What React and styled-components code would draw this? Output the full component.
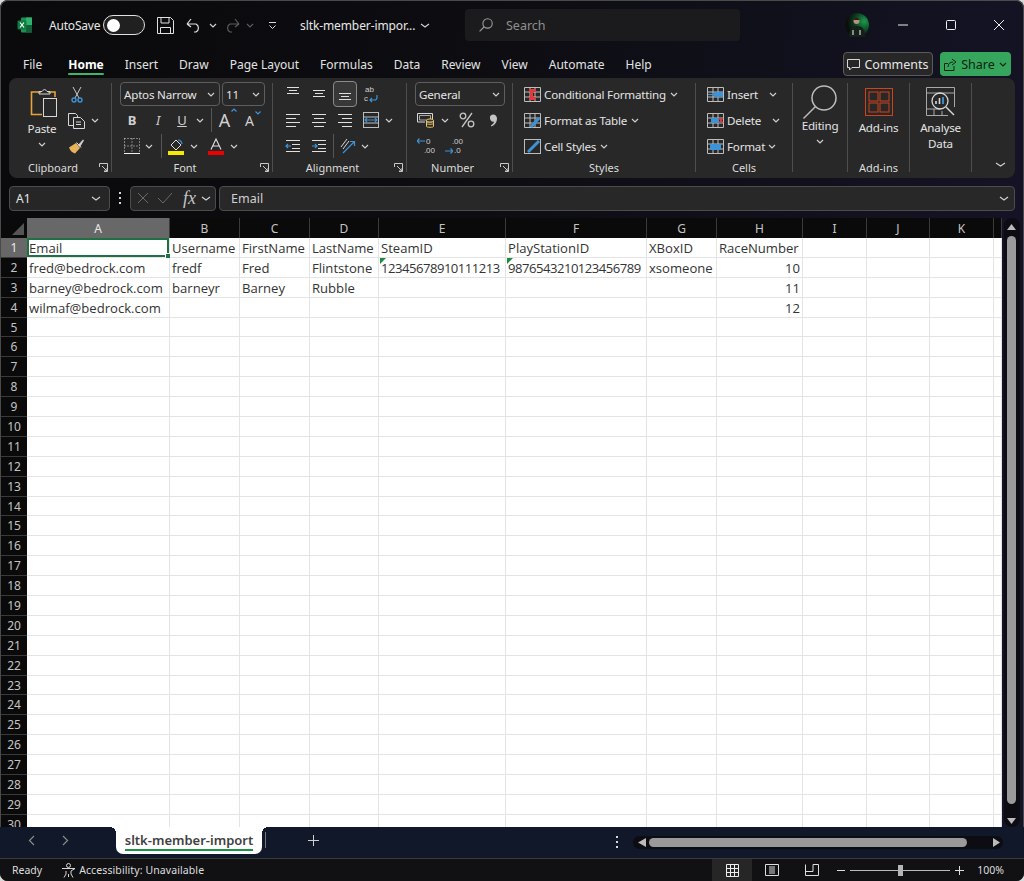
import React from 'react';
import styled, { createGlobalStyle } from 'styled-components';

const UI = '"Noto Sans", "Open Sans", sans-serif';

const GlobalStyle = createGlobalStyle`
  html, body { margin: 0; padding: 0; background: #d9d9d9; }
  body { font-family: ${UI}; width: 1024px; height: 881px; overflow: hidden; }
  * { box-sizing: border-box; }
`;

const Window = styled.div`
  width: 1024px;
  height: 881px;
  display: flex;
  flex-direction: column;
  overflow: hidden;
  border-radius: 8px;
  box-shadow: inset 0 0 0 1px #4a4a4a;
  background: linear-gradient(100deg, #0a0a0c 0%, #0d0d12 45%, #15152a 100%);
  color: #e6e6e6;
`;

/* title bar */
const TitleBar = styled.header`
  height: 50px;
  flex: none;
  display: flex;
  align-items: center;
  padding-left: 17px;
`;

const Slot = styled.div`
  width: ${(p) => p.$w || 26}px;
  margin-left: ${(p) => p.$ml || 0}px;
  height: 26px;
  flex: none;
  display: flex;
  align-items: center;
  justify-content: center;
  border-radius: 4px;
  ${(p) => p.$on && 'border: 1px solid #8a8a8a; background: #383838;'}
  ${(p) => p.$flip && 'transform: scaleX(-1);'}
`;

const AutoSave = styled.span`
  font-size: 12px;
  margin-left: 16px;
  width: 54px;
  flex: none;
  letter-spacing: -0.2px;
`;

const Toggle = styled.div`
  width: 42px;
  height: 20px;
  border: 1px solid #e0e0e0;
  border-radius: 10px;
  flex: none;
  display: flex;
  align-items: center;
  padding-left: 3px;
  background: #202020;
  &::before {
    content: '';
    width: 13px;
    height: 13px;
    border-radius: 50%;
    background: #fff;
  }
`;

const FileName = styled.span`
  font-size: 12px;
  letter-spacing: -0.1px;
  width: 118px;
  margin-left: 21px;
  flex: none;
  white-space: nowrap;
`;

const SearchBox = styled.div`
  width: 275px;
  height: 32px;
  margin-left: 33px;
  flex: none;
  background: #1b1b1d;
  border-radius: 4px;
  display: flex;
  align-items: center;
  padding-left: 14px;
  gap: 13px;
  font-size: 12.5px;
  color: #8f8f8f;
`;

const WinButtons = styled.div`
  display: flex;
  align-items: center;
  margin-left: 12px;
`;

/* tabs */
const TabsRow = styled.nav`
  height: 28px;
  flex: none;
  display: flex;
  align-items: center;
  padding-left: 23px;
  gap: 21px;
  font-size: 12px;
`;

const TabLabel = styled.span`
  position: relative;
  font-weight: ${(p) => (p.$on ? 700 : 400)};
  margin-left: ${(p) => (p.$on ? 5 : 0)}px;
  white-space: nowrap;
  color: ${(p) => (p.$on ? '#fff' : '#e2e2e2')};
  ${(p) =>
    p.$on &&
    `&::after {
      content: '';
      position: absolute;
      left: 0;
      right: 0;
      bottom: -2px;
      height: 2px;
      border-radius: 1px;
      background: #3fb56b;
    }`}
`;

const TabsRight = styled.div`
  margin-left: auto;
  margin-right: 13px;
  display: flex;
  gap: 7px;
`;

const CommentsBtn = styled.div`
  width: 90px;
  height: 24px;
  border: 1px solid #5a5a5a;
  border-radius: 4px;
  background: #272727;
  font-size: 12.5px;
  display: flex;
  align-items: center;
  justify-content: center;
  gap: 4px;
`;

const ShareBtn = styled.div`
  width: 71px;
  height: 24px;
  border-radius: 4px;
  background: #35a65c;
  color: #0c2414;
  font-size: 12.5px;
  display: flex;
  align-items: center;
  justify-content: center;
  gap: 4px;
`;

/* ribbon */
const Ribbon = styled.div`
  height: 100px;
  flex: none;
  margin: 0 9px;
  background: #282828;
  border-radius: 8px;
  display: flex;
  font-size: 11.6px;
  letter-spacing: -0.2px;
  color: #e4e4e4;
`;

const Group = styled.section`
  width: ${(p) => p.$w}px;
  flex: none;
  display: flex;
  flex-direction: column;
`;

const GroupBody = styled.div`
  height: 81px;
  padding-top: 3px;
  display: flex;
  flex-direction: ${(p) => (p.$row ? 'row' : 'column')};
`;

const GroupFoot = styled.div`
  height: 19px;
  display: flex;
  align-items: center;
  font-size: 11px;
  letter-spacing: 0;
  color: #dcdcdc;
  padding-bottom: 2px;
`;

const GroupLabel = styled.span`
  flex: 1;
  text-align: center;
`;

const LauncherBox = styled.span`
  margin: 0 3px 0 2px;
  display: flex;
`;

const Divider = styled.div`
  width: 1px;
  height: 89px;
  margin-top: 5px;
  flex: none;
  background: #4e4e4e;
`;

const ToolRow = styled.div`
  height: 26px;
  display: flex;
  align-items: center;
  padding-left: ${(p) => p.$pl || 0}px;
`;

const RowRule = styled.div`
  width: 1px;
  height: 24px;
  flex: none;
  margin: 0 ${(p) => p.$m || 4}px;
  background: #555;
`;

const Select = styled.div`
  width: ${(p) => p.$w}px;
  height: 24px;
  margin-left: ${(p) => p.$ml || 0}px;
  flex: none;
  border: 1px solid #5e5e5e;
  border-radius: 4px;
  display: flex;
  align-items: center;
  justify-content: space-between;
  padding: 0 4px 0 3px;
  white-space: nowrap;
`;

const Glyph = styled.span`
  font-size: ${(p) => p.$size || 13}px;
  font-weight: ${(p) => p.$weight || 400};
  font-style: ${(p) => (p.$italic ? 'italic' : 'normal')};
  text-decoration: ${(p) => (p.$under ? 'underline' : 'none')};
  color: #d0d0d0;
  letter-spacing: 0;
`;

const SizeGlyph = styled.div`
  display: flex;
  align-items: flex-start;
  gap: 1px;
`;

/* small stacked text inside a ribbon button: wrap text, decimals */
const StackIcon = styled.div`
  width: 18px;
  display: flex;
  flex-direction: column;
  font-family: "Liberation Sans", sans-serif;
  font-size: 8px;
  line-height: 9.2px;
  letter-spacing: 0;
  color: #d0d0d0;
`;

const StackLine = styled.div`
  display: flex;
  align-items: center;
  justify-content: ${(p) => (p.$end ? 'flex-end' : 'flex-start')};
  gap: 1px;
  padding-left: ${(p) => p.$pl || 0}px;
`;

const BigBtn = styled.div`
  width: ${(p) => p.$w}px;
  margin-left: ${(p) => p.$ml || 0}px;
  flex: none;
  display: flex;
  flex-direction: column;
  align-items: center;
  padding-top: ${(p) => p.$pt || 0}px;
  line-height: 16px;
  text-align: center;
`;

const BigIcon = styled.div`
  height: ${(p) => p.$h}px;
  margin-left: ${(p) => p.$ml || 0}px;
  display: flex;
  align-items: center;
  justify-content: center;
`;

const BigText = styled.span`
  margin-top: ${(p) => p.$mt || 0}px;
`;

const ListRow = styled.div`
  height: 26px;
  display: flex;
  align-items: center;
  padding-left: 11px;
  white-space: nowrap;
  gap: 3px;
`;

const ListChev = styled.span`
  margin-left: ${(p) => p.$ml || 0}px;
  display: flex;
`;

const CollapseCell = styled.div`
  flex: 1;
  display: flex;
  align-items: flex-end;
  justify-content: flex-end;
  padding: 0 9px 11px 0;
`;

/* formula bar */
const FormulaBar = styled.div`
  height: 40px;
  flex: none;
  padding: 0 9px;
  display: flex;
  align-items: center;
`;

const NameBox = styled.div`
  width: 101px;
  height: 25px;
  flex: none;
  background: #262626;
  border: 1px solid #4c4c4c;
  border-radius: 4px;
  display: flex;
  align-items: center;
  justify-content: space-between;
  padding: 0 8px 0 6px;
  font-size: 12px;
`;

const Dots = styled.div`
  width: 20px;
  flex: none;
  display: flex;
  justify-content: center;
`;

const FxBox = styled.div`
  width: 86px;
  height: 25px;
  flex: none;
  background: #262626;
  border: 1px solid #4c4c4c;
  border-radius: 4px;
  display: flex;
  align-items: center;
  padding-left: 6px;
  gap: 8px;
`;

const FxText = styled.span`
  font-family: "Liberation Serif", serif;
  font-style: italic;
  font-size: 18px;
  line-height: 20px;
  color: #c4c4c4;
  margin: 0 -3px 0 2px;
`;

const FormulaInput = styled.div`
  flex: 1;
  height: 25px;
  margin-left: 3px;
  background: #282828;
  border: 1px solid #4c4c4c;
  border-radius: 4px;
  display: flex;
  align-items: center;
  justify-content: space-between;
  padding: 0 5px 0 11px;
  font-size: 12.5px;
  color: #d0d0d0;
`;

/* sheet */
const SheetArea = styled.div`
  height: 609px;
  flex: none;
  display: flex;
  padding-left: 1px;
`;

const Sheet = styled.div`
  width: 1001px;
  flex: none;
  overflow: hidden;
  display: grid;
  grid-template-columns: 26px 143px 70px 70px 69px 127px 141px 70px 86px 64px 63px 64px 8px;
  grid-template-rows: 20px;
  grid-auto-rows: 19.9px;
  background: #fff;
`;

const CornerCell = styled.div`
  background: #0a0a0a;
  display: flex;
  align-items: flex-end;
  justify-content: flex-end;
  padding: 0 3px 3px 0;
  &::after {
    content: '';
    width: 12px;
    height: 12px;
    background: #555;
    clip-path: polygon(100% 0, 100% 100%, 0 100%);
  }
`;

const ColHead = styled.div`
  background: ${(p) => (p.$on ? '#686868' : '#0a0a0a')};
  border-right: 1px solid #3a3a3a;
  color: ${(p) => (p.$on ? '#e8e8e8' : '#c4c4c4')};
  font-size: 12px;
  display: flex;
  align-items: center;
  justify-content: center;
`;

const RowHead = styled.div`
  background: ${(p) => (p.$on ? '#686868' : '#0a0a0a')};
  border-bottom: 1px solid #3a3a3a;
  color: ${(p) => (p.$on ? '#e8e8e8' : '#c4c4c4')};
  font-size: 12px;
  display: flex;
  align-items: center;
  justify-content: center;
`;

const Cell = styled.div`
  position: relative;
  background: #fff;
  border-right: 1px solid #e4e4e4;
  border-bottom: 1px solid #e4e4e4;
  color: #333;
  font-family: "Open Sans", sans-serif;
  font-size: 13.1px;
  line-height: 19px;
  padding: 1px 2px 0 2px;
  white-space: nowrap;
  text-align: ${(p) => (p.$right ? 'right' : 'left')};
  letter-spacing: ${(p) => (p.$digits ? '-0.5px' : '0')};
  ${(p) =>
    p.$flag &&
    `&::before {
      content: '';
      position: absolute;
      left: 1px;
      top: 0;
      width: 6px;
      height: 6px;
      background: #1e8a3c;
      clip-path: polygon(0 0, 100% 0, 0 100%);
    }`}
  ${(p) =>
    p.$sel &&
    `box-shadow: inset 0 0 0 2px #1f7145;
    &::after {
      content: '';
      position: absolute;
      right: -2px;
      bottom: -2px;
      width: 5px;
      height: 5px;
      background: #1f7145;
      outline: 1px solid #fff;
    }`}
`;

const VScroll = styled.div`
  flex: 1;
  display: flex;
  justify-content: center;
  padding: 0 3px 0 0;
`;

const VGutter = styled.div`
  width: 16px;
  display: flex;
  flex-direction: column;
  align-items: center;
  padding: 6px 0 3px;
  background: #0c0c12;
  border-radius: 8px;
`;

const VTrack = styled.div`
  width: 9px;
  flex: 1;
  border-radius: 5px;
  margin: 6px 0 14px;
  background: #9a9a9a;
`;

/* bottom */
const SheetTabs = styled.div`
  height: 31px;
  flex: none;
  display: flex;
  align-items: flex-start;
  background: #10182a;
`;

const NavArrows = styled.div`
  width: 116px;
  height: 27px;
  flex: none;
  display: flex;
  align-items: center;
  padding-left: 28px;
  gap: 25px;
`;

const TabLine = styled.span`
  border-bottom: 2px solid #1c9148;
  line-height: 18px;
`;

const SheetTab = styled.div`
  position: relative;
  width: 146px;
  height: 27px;
  flex: none;
  background: #fff;
  border-radius: 0 0 7px 7px;
  color: #3f3f3f;
  font-size: 13px;
  font-weight: 600;
  display: flex;
  justify-content: center;
  align-items: center;
  white-space: nowrap;
  &::before,
  &::after {
    content: '';
    position: absolute;
    top: 0;
    width: 6px;
    height: 6px;
  }
  &::before {
    left: -6px;
    background: radial-gradient(circle at 0 100%, transparent 6px, #fff 6px);
  }
  &::after {
    right: -6px;
    background: radial-gradient(circle at 100% 100%, transparent 6px, #fff 6px);
  }
`;

const TabRule = styled.div`
  width: 1px;
  height: 16px;
  margin: 5px 0 0 3px;
  flex: none;
  background: #777;
`;

const AddSheet = styled.div`
  margin-left: 42px;
  height: 27px;
  flex: none;
  display: flex;
  align-items: center;
`;

const TabDots = styled.div`
  margin: 9px 15px 0 auto;
  flex: none;
`;

const HScrollWrap = styled.div`
  width: 370px;
  height: 13px;
  margin: 9px 21px 0 0;
  flex: none;
  background: #0c0c12;
  border-radius: 7px;
  display: flex;
  align-items: center;
  padding-left: 5px;
  gap: 3px;
`;

const HThumb = styled.div`
  width: 318px;
  height: 9px;
  flex: none;
  border-radius: 5px;
  background: #9a9a9a;
  margin-right: 23px;
`;

const StatusBar = styled.footer`
  height: 23px;
  flex: none;
  display: flex;
  align-items: center;
  background: #111113;
  border-top: 1px solid #3a3a3a;
  padding-left: 12px;
  font-size: 10.5px;
  color: #dedede;
`;

const StatusText = styled.span`
  margin-left: ${(p) => p.$ml || 0}px;
  letter-spacing: ${(p) => p.$ls || 0}px;
  white-space: nowrap;
`;

const StatusIcon = styled.span`
  margin-left: 19px;
  display: flex;
`;

const ViewBtn = styled.div`
  width: 40px;
  height: 22px;
  flex: none;
  display: flex;
  align-items: center;
  justify-content: center;
  background: ${(p) => (p.$on ? '#262626' : 'transparent')};
`;

const ViewGroup = styled.div`
  margin-left: auto;
  display: flex;
`;

const ZoomTrack = styled.div`
  width: 100px;
  height: 1px;
  margin: 0 5px;
  flex: none;
  background: #bbb;
  display: flex;
  justify-content: center;
  align-items: center;
  &::after {
    content: '';
    width: 5px;
    height: 11px;
    background: #b5b5b5;
  }
`;

const ZoomWrap = styled.div`
  display: flex;
  align-items: center;
  margin: 0 20px 0 5px;
`;

const ZoomValue = styled.span`
  margin-left: 13px;
`;

/* icons */
const SvgBase = styled.svg`
  display: block;
  flex: none;
`;

const Svg = ({ w = 16, h = 16, children, ...rest }) => (
  <SvgBase width={w} height={h} viewBox={`0 0 ${w} ${h}`} fill="none" stroke="#d8d8d8" strokeWidth="1" {...rest}>
    {children}
  </SvgBase>
);

const Chev = ({ w = 8, c = '#cfcfcf' }) => (
  <Svg w={w} h={5} stroke={c} strokeWidth="1.2">
    <path d={`M1 1l${(w - 2) / 2} 3l${(w - 2) / 2} -3`} />
  </Svg>
);

// rows of lines: [x1, x2, y]
const Lines = ({ rows, children }) => (
  <Svg w={16} h={16} stroke="#e0e0e0">
    {rows.map(([a, b, y]) => (
      <path key={y + '-' + a} d={`M${a} ${y}.5H${b}`} />
    ))}
    {children}
  </Svg>
);

const Launcher = () => (
  <LauncherBox>
    <Svg w={9} h={9} stroke="#c8c8c8">
      <path d="M.5 4V.5H8.5V8.5H5M3 3l5 5M5 8h3V5" />
    </Svg>
  </LauncherBox>
);

const ExcelLogo = () => (
  <Svg w={16} h={16} stroke="none">
    <rect x="4" y="0.5" width="11" height="15" rx="1" fill="#1f8f52" />
    <rect x="9" y="0.5" width="6" height="7.5" fill="#2fb26d" />
    <rect x="9" y="8" width="6" height="7.5" fill="#135f37" />
    <rect x="0.5" y="3.5" width="9" height="9" rx="1" fill="#0f7b40" />
    <path d="M3 5.5l4 5M7 5.5l-4 5" stroke="#fff" strokeWidth="1.2" />
  </Svg>
);

const SaveIcon = () => (
  <Svg w={17} h={17} stroke="#e0e0e0">
    <path d="M.5.5H13.5L16.5 3.5V16.5H.5ZM4 .5V6H12V.5M3.5 16.5V10.5H13.5V16.5" />
  </Svg>
);

const UndoIcon = ({ c = '#e0e0e0' }) => (
  <Svg w={16} h={16} stroke={c} strokeWidth="1.2">
    <path d="M1 7h9a4.5 4.5 0 0 1 0 8H8M1 7l4-5M1 7l4 3" />
  </Svg>
);

const Customize = () => (
  <Svg w={9} h={9} stroke="#d8d8d8">
    <path d="M1 1.5h7M1.5 4.5l3 3l3 -3" />
  </Svg>
);

const Avatar = () => (
  <SvgBase width="24" height="24" viewBox="0 0 24 24">
    <defs>
      <radialGradient id="av" cx="0.8" cy="0.35" r="0.7">
        <stop offset="0" stopColor="#1c9a4c" />
        <stop offset="0.6" stopColor="#0d3a20" />
        <stop offset="1" stopColor="#0a0f0c" />
      </radialGradient>
    </defs>
    <circle cx="12" cy="12" r="12" fill="url(#av)" />
    <path d="M4 24c0-8 3-11 8-11s8 3 8 11z" fill="#14201a" />
    <circle cx="11.5" cy="8" r="3" fill="#b59476" />
    <path d="M8.5 7c0-3 6-3 6 0z" fill="#2a2016" />
    <path d="M8 22v-5M15 22v-5" stroke="#a8a898" strokeWidth="1.6" />
  </SvgBase>
);

const PasteIcon = () => (
  <Svg w={28} h={30} stroke="#e8a33b" strokeWidth="1.6">
    <path d="M11 4H1.5V26.5H12M18 4H25V9" />
    <path d="M9 6V3.5H12L14.5 1L17 3.5H20V6Z" stroke="#d8d8d8" strokeWidth="1" />
    <rect x="13.5" y="10.5" width="13" height="18" stroke="#d8d8d8" strokeWidth="1" />
  </Svg>
);

const CutIcon = () => (
  <Svg w={12} h={17}>
    <path d="M2 1l6 11M10 1L4 12" stroke="#c8c8c8" />
    <circle cx="3" cy="14" r="2" stroke="#3c93d8" strokeWidth="1.4" />
    <circle cx="9" cy="14" r="2" stroke="#3c93d8" strokeWidth="1.4" />
  </Svg>
);

const CopyIcon = () => (
  <Svg w={17} h={17}>
    <path d="M5.5 13.5H.5V1.5H7.5L9.5 3.5V5" />
    <path d="M5.5 5.5H12.5L16.5 9.5V16.5H5.5ZM8 10h5M8 12.5h5" />
  </Svg>
);

const PainterIcon = () => (
  <Svg w={17} h={16} stroke="none">
    <path d="M1 9.5L8 5l4 5L7 15.5C5 15 2 13 1 9.5Z" fill="#e6b25a" />
    <path d="M10 7l5-5.5l1 1L12 9" fill="#cfcfcf" />
    <path d="M8.5 4.5l4.5 5" stroke="#f2f2f2" />
  </Svg>
);

const BordersIcon = () => (
  <Svg w={16} h={16}>
    <path d="M.5 .5H15.5M.5 8H15.5M8 .5V15M.5 .5V15M15.5 .5V15" strokeDasharray="1 2" />
    <path d="M0 15.5H16" stroke="#f0f0f0" />
  </Svg>
);

const FillIcon = () => (
  <Svg w={16} h={17}>
    <path d="M3 7l5-5 5 5-5 5Z" stroke="#e0e0e0" />
    <path d="M10 2c2 0 4 2 4 4" stroke="#3c93d8" strokeWidth="1.2" />
    <rect x="0" y="13" width="16" height="4" fill="#f6ea00" stroke="none" />
  </Svg>
);

const FontColorIcon = () => (
  <Svg w={16} h={17} strokeWidth="1.1">
    <path d="M3 11.5L8 1l5 10.5M5 8h6" stroke="#e0e0e0" />
    <rect x="0" y="13" width="16" height="4" fill="#ef0000" stroke="none" />
  </Svg>
);

const Caret = ({ up }) => (
  <Svg w={6} h={4} stroke="#3c93d8" strokeWidth="1.2">
    <path d={up ? 'M.5 3.5L3 1l2.5 2.5' : 'M.5 .5L3 3l2.5-2.5'} />
  </Svg>
);

const WrapIcon = () => (
  <StackIcon>
    <StackLine $pl={3}>ab</StackLine>
    <StackLine $pl={2}>
      c
      <Svg w={9} h={8} stroke="#3c93d8" strokeWidth="1.2">
        <path d="M8 0v2.5a2.5 2.5 0 0 1-2.5 2.5H1M3 3L1 5l2 2" />
      </Svg>
    </StackLine>
  </StackIcon>
);

const PercentIcon = () => (
  <Svg w={16} h={16} stroke="#c4c4c4" strokeWidth="1.3">
    <circle cx="4" cy="4" r="2.8" />
    <circle cx="12" cy="12" r="2.8" />
    <path d="M13 1L3 15" />
  </Svg>
);

const CommaIcon = () => (
  <Svg w={9} h={13} stroke="none">
    <path d="M4 0.5a4 4 0 0 1 4 4.3c0 3.6-2.6 6.6-5.5 7.7l-.6-1c1.8-1 3-2.4 3.2-3.9A3.2 3.2 0 1 1 4 0.5Z" fill="#c4c4c4" />
  </Svg>
);

const AccountingIcon = () => (
  <Svg w={18} h={16}>
    <path d="M.5 1.5H15.5V10H9M.5 1.5V10H8" />
    <path d="M2.5 3.5H13.5V8H2.5Z" stroke="#a8a8a8" />
    <ellipse cx="13" cy="8.5" rx="3.5" ry="1.6" stroke="#e8c36a" fill="#3a3220" />
    <path d="M9.5 8.5V14.5c0 1 7 1 7 0V8.5M9.5 11.5c0 1 7 1 7 0" stroke="#e8c36a" />
  </Svg>
);

const ArrowLeft = () => (
  <Svg w={8} h={6} stroke="#3c93d8" strokeWidth="1.2"><path d="M0 3H8M2.5 .5L0 3l2.5 2.5" /></Svg>
);

const ArrowRight = () => (
  <Svg w={8} h={6} stroke="#3c93d8" strokeWidth="1.2"><path d="M0 3H8M5.5 .5L8 3L5.5 5.5" /></Svg>
);

const MiniGrid = ({ children }) => (
  <Svg w={17} h={15} stroke="#bdbdbd">
    <path d="M.5 .5H16.5V14.5H.5ZM.5 5H16.5M.5 10H16.5M6 .5V14.5M11 .5V14.5" />
    {children}
  </Svg>
);

const Inc = ({ dir }) => (
  <Lines rows={[[1, 15, 2], [7, 15, 6], [7, 15, 10], [1, 15, 13]]}>
    <path d={dir ? 'M1 8H6M4 6l2 2l-2 2' : 'M1 8H6M3 6L1 8l2 2'} stroke="#3c93d8" strokeWidth="1.2" />
  </Lines>
);

const SearchGlass = ({ s = 36, c = '#bdbdbd', sw = 1.5 }) => (
  <SvgBase width={s} height={s} viewBox="0 0 36 36" fill="none" stroke={c} strokeWidth={sw * (36 / s)}>
    <circle cx="22" cy="14" r="12" />
    <path d="M13.5 22.5L1.5 34.5" />
  </SvgBase>
);

const AddInsIcon = () => (
  <Svg w={28} h={28} stroke="#d0431a">
    <rect x=".5" y=".5" width="27" height="27" />
    <rect x="4" y="4" width="9" height="9" />
    <rect x="15" y="4" width="9" height="9" />
    <rect x="4" y="15" width="9" height="9" />
    <rect x="15" y="15" width="9" height="9" />
  </Svg>
);

const AnalyseIcon = () => (
  <Svg w={29} h={29} stroke="#a8a8a8">
    <path d="M.5 .5H28.5V20M.5 .5V28.5H22M.5 6H28.5M.5 22H14M8 22v6M16 24v4" />
    <circle cx="14" cy="14" r="8" stroke="#d8d8d8" strokeWidth="1.3" />
    <path d="M20 20l8 8" stroke="#d8d8d8" strokeWidth="1.4" />
    <path d="M10 17v-3M13.5 17v-6" stroke="#d8d8d8" strokeWidth="1.6" />
    <path d="M17 17v-7" stroke="#3c93d8" strokeWidth="1.8" />
  </Svg>
);

const alignTop = [[2, 14, 1], [4, 12, 4], [2, 14, 7]];
const alignMid = [[2, 14, 4], [4, 12, 7], [2, 14, 10]];
const alignBot = [[2, 14, 7], [4, 12, 10], [2, 14, 13]];

const columns = ['A', 'B', 'C', 'D', 'E', 'F', 'G', 'H', 'I', 'J', 'K', ''];

const data = [
  ['Email', 'Username', 'FirstName', 'LastName', 'SteamID', 'PlayStationID', 'XBoxID', 'RaceNumber'],
  ['fred@bedrock.com', 'fredf', 'Fred', 'Flintstone', '12345678910111213', '9876543210123456789', 'xsomeone', 10],
  ['barney@bedrock.com', 'barneyr', 'Barney', 'Rubble', '', '', '', 11],
  ['wilmaf@bedrock.com', '', '', '', '', '', '', 12],
];

const tabs = ['File', 'Home', 'Insert', 'Draw', 'Page Layout', 'Formulas', 'Data', 'Review', 'View', 'Automate', 'Help'];

const SheetGrid = () => {
  const rows = [];
  for (let r = 0; r < 30; r++) {
    rows.push(
      <RowHead key={'h' + r} $on={r === 0}>{r + 1}</RowHead>
    );
    columns.forEach((_, c) => {
      const v = data[r] ? data[r][c] : undefined;
      rows.push(
        <Cell
          key={r + '-' + c}
          $right={typeof v === 'number'}
          $digits={r === 1 && (c === 4 || c === 5)}
          $flag={r === 1 && (c === 4 || c === 5)}
          $sel={r === 0 && c === 0}
        >
          {v}
        </Cell>
      );
    });
  }
  return (
    <Sheet>
      <CornerCell />
      {columns.map((c, i) => (
        <ColHead key={'c' + i} $on={c === 'A'}>{c}</ColHead>
      ))}
      {rows}
    </Sheet>
  );
};

const VDots = () => (
  <Svg w={2} h={12} stroke="#d8d8d8" strokeWidth="2" strokeDasharray="2 3">
    <path d="M1 0V12" />
  </Svg>
);

export default function App() {
  return (
    <Window>
      <GlobalStyle />
      <TitleBar>
        <ExcelLogo />
        <AutoSave>AutoSave</AutoSave>
        <Toggle />
        <Slot $w={20} $ml={10}><SaveIcon /></Slot>
        <Slot $w={20} $ml={9}><UndoIcon /></Slot>
        <Slot $w={14} $ml={2}><Chev /></Slot>
        <Slot $w={20} $ml={2} $flip><UndoIcon c="#5c5c5c" /></Slot>
        <Slot $w={14} $ml={1}><Chev c="#5c5c5c" /></Slot>
        <Slot $w={14} $ml={8}><Customize /></Slot>
        <FileName>sltk-member-impor...</FileName>
        <Slot $w={14}><Chev w={10} /></Slot>
        <SearchBox>
          <SearchGlass s={14} c="#9c9c9c" sw={1.1} />
          Search
        </SearchBox>
        <Slot $w={24} $ml={105}><Avatar /></Slot>
        <WinButtons>
          <Slot $w={24} $ml={10}><Svg w={10} h={2} stroke="#eee"><path d="M0 1H10" /></Svg></Slot>
          <Slot $w={24} $ml={24}><Svg w={10} h={10} stroke="#eee"><rect x=".5" y=".5" width="9" height="9" rx="1" /></Svg></Slot>
          <Slot $w={24} $ml={24}><Svg w={10} h={10} stroke="#eee"><path d="M0 0L10 10M10 0L0 10" /></Svg></Slot>
        </WinButtons>
      </TitleBar>

      <TabsRow>
        {tabs.map((t) => (
          <TabLabel key={t} $on={t === 'Home'}>{t}</TabLabel>
        ))}
        <TabsRight>
          <CommentsBtn>
            <Svg w={13} h={13}><path d="M.5 1.5H12.5V9.5H5L2.5 12V9.5H.5Z" /></Svg>
            Comments
          </CommentsBtn>
          <ShareBtn>
            <Svg w={13} h={13} stroke="#0c2414"><path d="M.5 5.5H4M.5 5.5V12.5H10V8M4 9c0-3 2-5 5-5M8 1l4 3l-4 3" /></Svg>
            Share
            <Chev c="#0c2414" />
          </ShareBtn>
        </TabsRight>
      </TabsRow>

      <Ribbon>
        <Group $w={102}>
          <GroupBody $row>
            <BigBtn $w={56} $ml={5} $pt={7}>
              <BigIcon $h={30} $ml={4}><PasteIcon /></BigIcon>
              <BigText $mt={3}>Paste</BigText>
              <BigIcon $h={14}><Chev /></BigIcon>
            </BigBtn>
            <div>
              <ToolRow><Slot $w={12} $ml={1}><CutIcon /></Slot></ToolRow>
              <ToolRow><Slot $w={17} $ml={-2}><CopyIcon /></Slot><Slot $w={16} $ml={2}><Chev /></Slot></ToolRow>
              <ToolRow><Slot $w={17} $ml={-2}><PainterIcon /></Slot></ToolRow>
            </div>
          </GroupBody>
          <GroupFoot><GroupLabel>Clipboard</GroupLabel><Launcher /></GroupFoot>
        </Group>
        <Divider />
        <Group $w={160}>
          <GroupBody>
            <ToolRow $pl={8}>
              <Select $w={100}><span>Aptos Narrow</span><Chev /></Select>
              <Select $w={43} $ml={2}><span>11</span><Chev /></Select>
            </ToolRow>
            <ToolRow $pl={7}>
              <Slot><Glyph $weight={700}>B</Glyph></Slot>
              <Slot><Glyph $italic>I</Glyph></Slot>
              <Slot $w={22}><Glyph $under>U</Glyph></Slot>
              <Slot $w={14}><Chev /></Slot>
              <RowRule />
              <Slot $w={24}><SizeGlyph><Glyph $size={18}>A</Glyph><Caret up /></SizeGlyph></Slot>
              <Slot $w={26}><SizeGlyph><Glyph $size={14}>A</Glyph><Caret /></SizeGlyph></Slot>
            </ToolRow>
            <ToolRow $pl={12}>
              <Slot $w={16}><BordersIcon /></Slot>
              <Slot $w={18}><Chev /></Slot>
              <RowRule $m={3} />
              <Slot $w={16} $ml={3}><FillIcon /></Slot>
              <Slot $w={20}><Chev /></Slot>
              <Slot $w={16} $ml={4}><FontColorIcon /></Slot>
              <Slot $w={20}><Chev /></Slot>
            </ToolRow>
          </GroupBody>
          <GroupFoot><GroupLabel>Font</GroupLabel><Launcher /></GroupFoot>
        </Group>
        <Divider />
        <Group $w={133}>
          <GroupBody>
            <ToolRow $pl={7}>
              <Slot><Lines rows={alignTop} /></Slot>
              <Slot><Lines rows={alignMid} /></Slot>
              <Slot $w={24} $ml={1} $on><Lines rows={alignBot} /></Slot>
              <Slot $ml={1}><WrapIcon /></Slot>
            </ToolRow>
            <ToolRow $pl={7}>
              <Slot><Lines rows={[[1, 15, 2], [1, 11, 6], [1, 15, 10], [1, 11, 14]]} /></Slot>
              <Slot><Lines rows={[[1, 15, 2], [3, 13, 6], [1, 15, 10], [3, 13, 14]]} /></Slot>
              <Slot><Lines rows={[[1, 15, 2], [5, 15, 6], [1, 15, 10], [5, 15, 14]]} /></Slot>
              <Slot $w={26}>
                <Svg w={16} h={16} stroke="#bdbdbd">
                  <rect x=".5" y=".5" width="15" height="15" />
                  <path d="M.5 5H15.5M.5 11H15.5" />
                  <path d="M2 8H14M4 6l-2 2l2 2M12 6l2 2l-2 2" stroke="#3c93d8" strokeWidth="1.2" />
                </Svg>
              </Slot>
              <Slot $w={10}><Chev /></Slot>
            </ToolRow>
            <ToolRow $pl={7}>
              <Slot><Inc /></Slot>
              <Slot><Inc dir /></Slot>
              <RowRule $m={1} />
              <Slot $w={26}>
                <Svg w={16} h={16} stroke="#d8d8d8">
                  <path d="M1 9L7 1M3 11L9 3" />
                  <path d="M3 15L14 4M10 3.5h4.5V8" stroke="#3c93d8" strokeWidth="1.2" />
                </Svg>
              </Slot>
              <Slot $w={8}><Chev /></Slot>
            </ToolRow>
          </GroupBody>
          <GroupFoot><GroupLabel>Alignment</GroupLabel><Launcher /></GroupFoot>
        </Group>
        <Divider />
        <Group $w={105}>
          <GroupBody>
            <ToolRow $pl={8}>
              <Select $w={90}><span>General</span><Chev /></Select>
            </ToolRow>
            <ToolRow $pl={10}>
              <Slot $w={18}><AccountingIcon /></Slot>
              <Slot $w={20}><Chev /></Slot>
              <Slot $w={24}><PercentIcon /></Slot>
              <Slot $w={28}><CommaIcon /></Slot>
            </ToolRow>
            <ToolRow $pl={9}>
              <Slot $w={20}>
                <StackIcon>
                  <StackLine><ArrowLeft />0</StackLine>
                  <StackLine $end>.00</StackLine>
                </StackIcon>
              </Slot>
              <Slot $w={8} />
              <Slot $w={20}>
                <StackIcon>
                  <StackLine $end>.00</StackLine>
                  <StackLine><ArrowRight />.0</StackLine>
                </StackIcon>
              </Slot>
            </ToolRow>
          </GroupBody>
          <GroupFoot><GroupLabel>Number</GroupLabel><Launcher /></GroupFoot>
        </Group>
        <Divider />
        <Group $w={182}>
          <GroupBody>
            <ListRow>
              <MiniGrid><path d="M5 2h7v3H5zM5 10h7v3H5z" fill="#e23b3b" stroke="none" /><path d="M6 5h3v5H6z" fill="#e23b3b" stroke="none" /></MiniGrid>
              Conditional Formatting<ListChev $ml={1}><Chev /></ListChev>
            </ListRow>
            <ListRow>
              <MiniGrid><path d="M7 14L15 5" stroke="#3c93d8" strokeWidth="3" /></MiniGrid>
              Format as Table<ListChev $ml={1}><Chev /></ListChev>
            </ListRow>
            <ListRow>
              <Svg w={17} h={15} stroke="#bdbdbd">
                <rect x=".5" y=".5" width="16" height="14" />
                <path d="M4 13L15 2" stroke="#3c93d8" strokeWidth="3" />
              </Svg>
              Cell Styles<ListChev $ml={1}><Chev /></ListChev>
            </ListRow>
          </GroupBody>
          <GroupFoot><GroupLabel>Styles</GroupLabel></GroupFoot>
        </Group>
        <Divider />
        <Group $w={96}>
          <GroupBody>
            <ListRow>
              <MiniGrid><rect x="7" y="5" width="9" height="5" fill="#3c93d8" stroke="none" /><path d="M1 7.5h6" stroke="#3c93d8" strokeWidth="1.3" /></MiniGrid>
              Insert<ListChev $ml={8}><Chev /></ListChev>
            </ListRow>
            <ListRow>
              <MiniGrid><rect x="4" y="5" width="8" height="5" fill="#3c93d8" stroke="none" /><path d="M12 5l4 5M16 5l-4 5" stroke="#e23b3b" strokeWidth="1.3" /></MiniGrid>
              Delete<ListChev $ml={8}><Chev /></ListChev>
            </ListRow>
            <ListRow>
              <MiniGrid><rect x="3" y="5" width="11" height="6" fill="#3c93d8" stroke="none" /></MiniGrid>
              Format<ListChev><Chev /></ListChev>
            </ListRow>
          </GroupBody>
          <GroupFoot><GroupLabel>Cells</GroupLabel></GroupFoot>
        </Group>
        <Divider />
        <Group $w={54}>
          <GroupBody>
            <BigBtn $w={54} $pt={4}>
              <BigIcon $h={33}><SearchGlass /></BigIcon>
              <BigText>Editing</BigText>
              <BigIcon $h={14}><Chev /></BigIcon>
            </BigBtn>
          </GroupBody>
          <GroupFoot />
        </Group>
        <Divider />
        <Group $w={61}>
          <GroupBody>
            <BigBtn $w={61} $pt={6}>
              <BigIcon $h={29}><AddInsIcon /></BigIcon>
              <BigText $mt={4}>Add-ins</BigText>
            </BigBtn>
          </GroupBody>
          <GroupFoot><GroupLabel>Add-ins</GroupLabel></GroupFoot>
        </Group>
        <Divider />
        <Group $w={61}>
          <GroupBody>
            <BigBtn $w={61} $pt={6}>
              <BigIcon $h={29}><AnalyseIcon /></BigIcon>
              <BigText $mt={4}>Analyse<br />Data</BigText>
            </BigBtn>
          </GroupBody>
          <GroupFoot />
        </Group>
        <Divider />
        <CollapseCell><Chev w={11} /></CollapseCell>
      </Ribbon>

      <FormulaBar>
        <NameBox>A1<Chev w={10} /></NameBox>
        <Dots><VDots /></Dots>
        <FxBox>
          <Svg w={12} h={12} stroke="#6a6a6a"><path d="M1 1l10 10M11 1L1 11" /></Svg>
          <Svg w={16} h={12} stroke="#6a6a6a"><path d="M1 6l5 5l9-10" /></Svg>
          <FxText>fx</FxText>
          <Chev w={10} />
        </FxBox>
        <FormulaInput>Email<Chev w={10} /></FormulaInput>
      </FormulaBar>

      <SheetArea>
        <SheetGrid />
        <VScroll>
          <VGutter>
            <Svg w={9} h={6} stroke="none"><path d="M4.5 0L9 6H0Z" fill="#bbb" /></Svg>
            <VTrack />
            <Svg w={9} h={6} stroke="none"><path d="M4.5 6L9 0H0Z" fill="#bbb" /></Svg>
          </VGutter>
        </VScroll>
      </SheetArea>

      <SheetTabs>
        <NavArrows>
          <Svg w={8} h={11} stroke="#8a8a8a" strokeWidth="1.2"><path d="M6 1L1.5 5.5L6 10" /></Svg>
          <Svg w={8} h={11} stroke="#8a8a8a" strokeWidth="1.2"><path d="M2 1l4.5 4.5L2 10" /></Svg>
        </NavArrows>
        <SheetTab><TabLine>sltk-member-import</TabLine></SheetTab>
        <TabRule />
        <AddSheet>
          <Svg w={11} h={11} stroke="#d0d0d0"><path d="M5.5 0V11M0 5.5H11" /></Svg>
        </AddSheet>
        <TabDots><VDots /></TabDots>
        <HScrollWrap>
          <Svg w={8} h={9} stroke="none"><path d="M0 4.5L8 0V9Z" fill="#bbb" /></Svg>
          <HThumb />
          <Svg w={7} h={9} stroke="none"><path d="M7 4.5L0 0V9Z" fill="#bbb" /></Svg>
        </HScrollWrap>
      </SheetTabs>

      <StatusBar>
        <StatusText>Ready</StatusText>
        <StatusIcon>
          <Svg w={15} h={15} stroke="#d8d8d8">
            <circle cx="7.5" cy="2.5" r="2" />
            <path d="M1 5.5h13L10 8v3l2 3.5M5 8v3L3 14.5M7.5 11v3" />
          </Svg>
        </StatusIcon>
        <StatusText $ml={3} $ls={0.1}>Accessibility: Unavailable</StatusText>
        <ViewGroup>
          <ViewBtn $on>
            <Svg w={13} h={13} stroke="#eee"><path d="M.5 .5H12.5V12.5H.5ZM.5 4.5H12.5M.5 8.5H12.5M4.5 .5V12.5M8.5 .5V12.5" /></Svg>
          </ViewBtn>
          <ViewBtn>
            <Svg w={14} h={12} stroke="#ddd"><path d="M.5 .5H13.5V11.5H.5ZM4 3H10M4 5H10M4 7H10M4 9H10" /></Svg>
          </ViewBtn>
          <ViewBtn>
            <Svg w={14} h={12} stroke="#ddd"><path d="M.5 .5V11.5H13.5V.5M.5 7.5H8V.5M8 .5H13.5" /></Svg>
          </ViewBtn>
        </ViewGroup>
        <ZoomWrap>
          <Svg w={8} h={1} stroke="#ddd"><path d="M0 .5H8" /></Svg>
          <ZoomTrack />
          <Svg w={9} h={9} stroke="#ddd"><path d="M0 4.5H9M4.5 0V9" /></Svg>
          <ZoomValue>100%</ZoomValue>
        </ZoomWrap>
      </StatusBar>
    </Window>
  );
}
